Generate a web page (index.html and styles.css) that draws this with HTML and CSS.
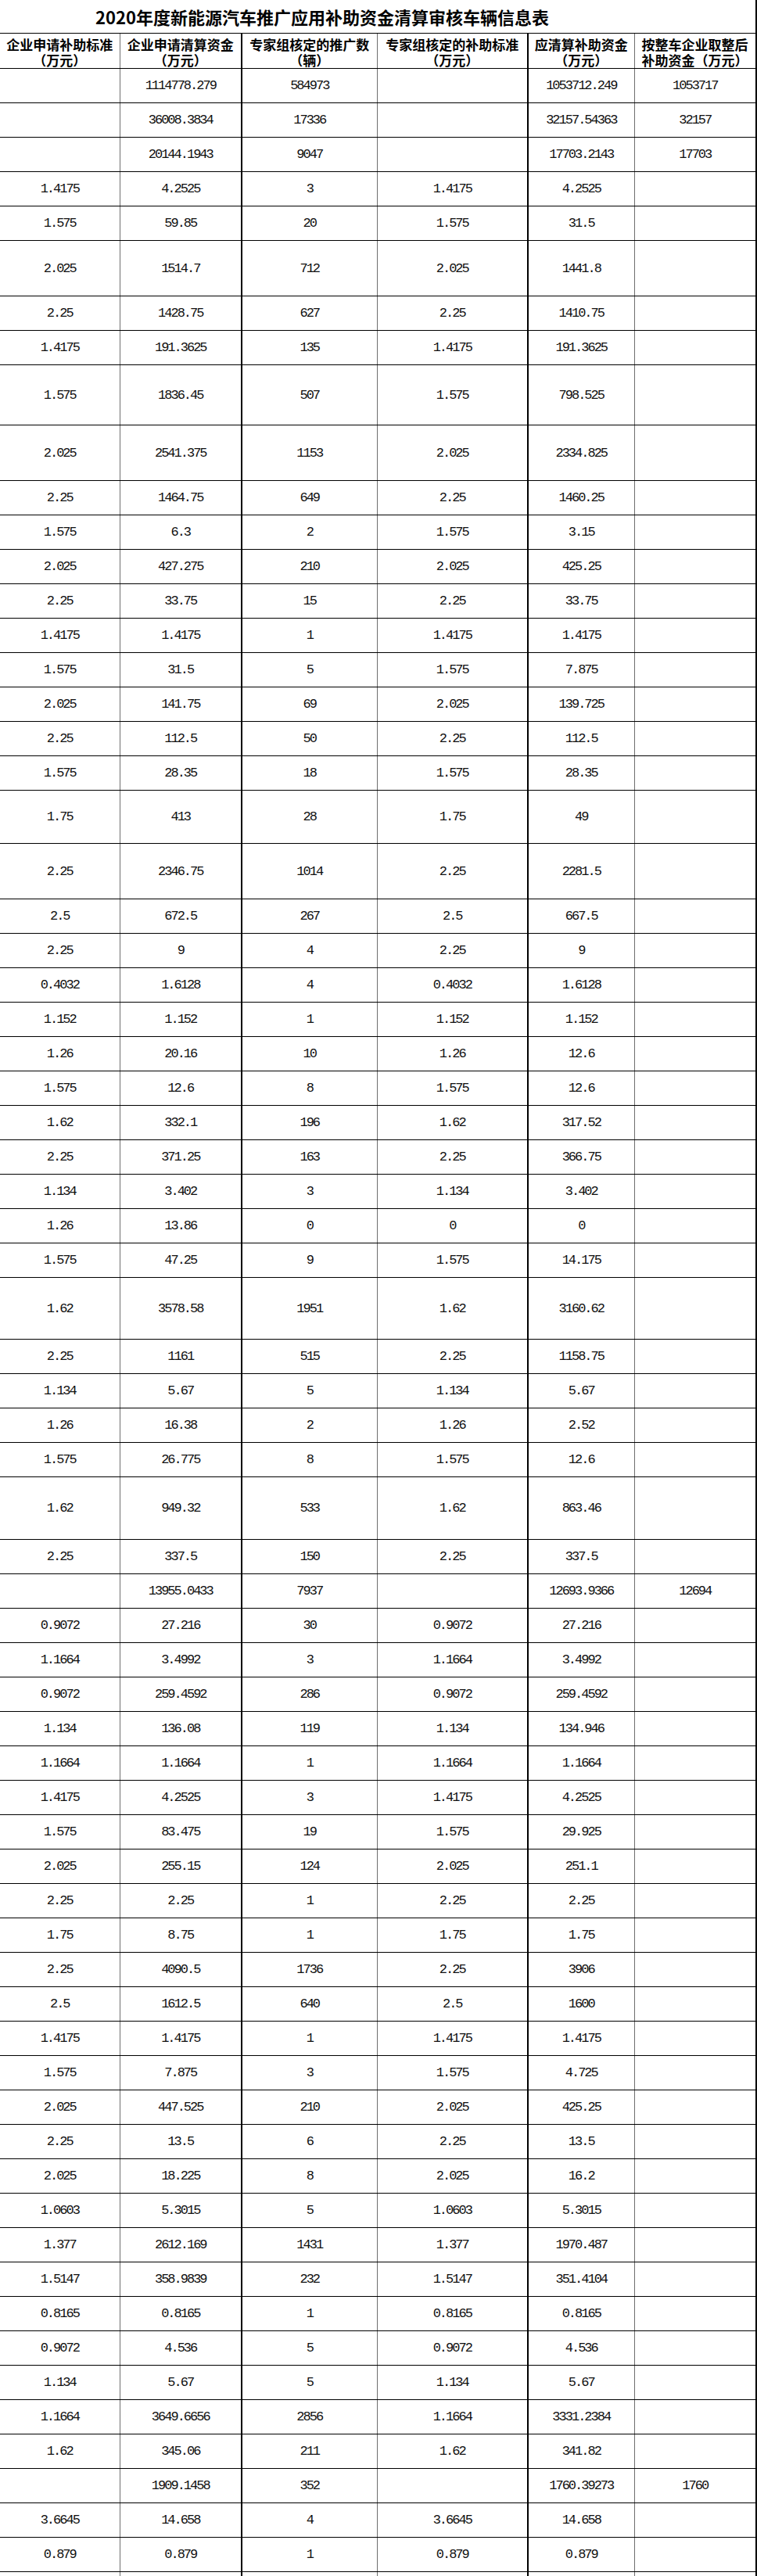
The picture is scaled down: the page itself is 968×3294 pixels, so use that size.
FILE: index.html
```html
<!DOCTYPE html>
<html lang="zh-CN">
<head>
<meta charset="utf-8">
<title>2020年度新能源汽车推广应用补助资金清算审核车辆信息表</title>
<link rel="stylesheet" href="styles.css">
</head>
<body>
<table class="sheet">
<colgroup><col class="c1"><col class="c2"><col class="c3"><col class="c4"><col class="c5"><col class="c6"></colgroup>
<tr class="title-row"><td class="title" colspan="6">2020年度新能源汽车推广应用补助资金清算审核车辆信息表</td></tr>
<tr class="head-row"><td class="head">企业申请补助标准<br>（万元）</td><td class="head">企业申请清算资金<br>（万元）</td><td class="head">专家组核定的推广数<br>（辆）</td><td class="head">专家组核定的补助标准<br>（万元）</td><td class="head">应清算补助资金<br>（万元）</td><td class="head head-left">按整车企业取整后补助资金（万元）</td></tr>
<tr><td></td><td>1114778.279</td><td>584973</td><td></td><td>1053712.249</td><td>1053717</td></tr>
<tr><td></td><td>36008.3834</td><td>17336</td><td></td><td>32157.54363</td><td>32157</td></tr>
<tr><td></td><td>20144.1943</td><td>9047</td><td></td><td>17703.2143</td><td>17703</td></tr>
<tr><td>1.4175</td><td>4.2525</td><td>3</td><td>1.4175</td><td>4.2525</td><td></td></tr>
<tr><td>1.575</td><td>59.85</td><td>20</td><td>1.575</td><td>31.5</td><td></td></tr>
<tr class="h71"><td>2.025</td><td>1514.7</td><td>712</td><td>2.025</td><td>1441.8</td><td></td></tr>
<tr><td>2.25</td><td>1428.75</td><td>627</td><td>2.25</td><td>1410.75</td><td></td></tr>
<tr><td>1.4175</td><td>191.3625</td><td>135</td><td>1.4175</td><td>191.3625</td><td></td></tr>
<tr class="h77"><td>1.575</td><td>1836.45</td><td>507</td><td>1.575</td><td>798.525</td><td></td></tr>
<tr class="h71"><td>2.025</td><td>2541.375</td><td>1153</td><td>2.025</td><td>2334.825</td><td></td></tr>
<tr><td>2.25</td><td>1464.75</td><td>649</td><td>2.25</td><td>1460.25</td><td></td></tr>
<tr><td>1.575</td><td>6.3</td><td>2</td><td>1.575</td><td>3.15</td><td></td></tr>
<tr><td>2.025</td><td>427.275</td><td>210</td><td>2.025</td><td>425.25</td><td></td></tr>
<tr><td>2.25</td><td>33.75</td><td>15</td><td>2.25</td><td>33.75</td><td></td></tr>
<tr><td>1.4175</td><td>1.4175</td><td>1</td><td>1.4175</td><td>1.4175</td><td></td></tr>
<tr><td>1.575</td><td>31.5</td><td>5</td><td>1.575</td><td>7.875</td><td></td></tr>
<tr><td>2.025</td><td>141.75</td><td>69</td><td>2.025</td><td>139.725</td><td></td></tr>
<tr><td>2.25</td><td>112.5</td><td>50</td><td>2.25</td><td>112.5</td><td></td></tr>
<tr><td>1.575</td><td>28.35</td><td>18</td><td>1.575</td><td>28.35</td><td></td></tr>
<tr class="h68"><td>1.75</td><td>413</td><td>28</td><td>1.75</td><td>49</td><td></td></tr>
<tr class="h71"><td>2.25</td><td>2346.75</td><td>1014</td><td>2.25</td><td>2281.5</td><td></td></tr>
<tr><td>2.5</td><td>672.5</td><td>267</td><td>2.5</td><td>667.5</td><td></td></tr>
<tr><td>2.25</td><td>9</td><td>4</td><td>2.25</td><td>9</td><td></td></tr>
<tr><td>0.4032</td><td>1.6128</td><td>4</td><td>0.4032</td><td>1.6128</td><td></td></tr>
<tr><td>1.152</td><td>1.152</td><td>1</td><td>1.152</td><td>1.152</td><td></td></tr>
<tr><td>1.26</td><td>20.16</td><td>10</td><td>1.26</td><td>12.6</td><td></td></tr>
<tr><td>1.575</td><td>12.6</td><td>8</td><td>1.575</td><td>12.6</td><td></td></tr>
<tr><td>1.62</td><td>332.1</td><td>196</td><td>1.62</td><td>317.52</td><td></td></tr>
<tr><td>2.25</td><td>371.25</td><td>163</td><td>2.25</td><td>366.75</td><td></td></tr>
<tr><td>1.134</td><td>3.402</td><td>3</td><td>1.134</td><td>3.402</td><td></td></tr>
<tr><td>1.26</td><td>13.86</td><td>0</td><td>0</td><td>0</td><td></td></tr>
<tr><td>1.575</td><td>47.25</td><td>9</td><td>1.575</td><td>14.175</td><td></td></tr>
<tr class="h79"><td>1.62</td><td>3578.58</td><td>1951</td><td>1.62</td><td>3160.62</td><td></td></tr>
<tr><td>2.25</td><td>1161</td><td>515</td><td>2.25</td><td>1158.75</td><td></td></tr>
<tr><td>1.134</td><td>5.67</td><td>5</td><td>1.134</td><td>5.67</td><td></td></tr>
<tr><td>1.26</td><td>16.38</td><td>2</td><td>1.26</td><td>2.52</td><td></td></tr>
<tr><td>1.575</td><td>26.775</td><td>8</td><td>1.575</td><td>12.6</td><td></td></tr>
<tr class="h80"><td>1.62</td><td>949.32</td><td>533</td><td>1.62</td><td>863.46</td><td></td></tr>
<tr><td>2.25</td><td>337.5</td><td>150</td><td>2.25</td><td>337.5</td><td></td></tr>
<tr><td></td><td>13955.0433</td><td>7937</td><td></td><td>12693.9366</td><td>12694</td></tr>
<tr><td>0.9072</td><td>27.216</td><td>30</td><td>0.9072</td><td>27.216</td><td></td></tr>
<tr><td>1.1664</td><td>3.4992</td><td>3</td><td>1.1664</td><td>3.4992</td><td></td></tr>
<tr><td>0.9072</td><td>259.4592</td><td>286</td><td>0.9072</td><td>259.4592</td><td></td></tr>
<tr><td>1.134</td><td>136.08</td><td>119</td><td>1.134</td><td>134.946</td><td></td></tr>
<tr><td>1.1664</td><td>1.1664</td><td>1</td><td>1.1664</td><td>1.1664</td><td></td></tr>
<tr><td>1.4175</td><td>4.2525</td><td>3</td><td>1.4175</td><td>4.2525</td><td></td></tr>
<tr><td>1.575</td><td>83.475</td><td>19</td><td>1.575</td><td>29.925</td><td></td></tr>
<tr><td>2.025</td><td>255.15</td><td>124</td><td>2.025</td><td>251.1</td><td></td></tr>
<tr><td>2.25</td><td>2.25</td><td>1</td><td>2.25</td><td>2.25</td><td></td></tr>
<tr><td>1.75</td><td>8.75</td><td>1</td><td>1.75</td><td>1.75</td><td></td></tr>
<tr><td>2.25</td><td>4090.5</td><td>1736</td><td>2.25</td><td>3906</td><td></td></tr>
<tr><td>2.5</td><td>1612.5</td><td>640</td><td>2.5</td><td>1600</td><td></td></tr>
<tr><td>1.4175</td><td>1.4175</td><td>1</td><td>1.4175</td><td>1.4175</td><td></td></tr>
<tr><td>1.575</td><td>7.875</td><td>3</td><td>1.575</td><td>4.725</td><td></td></tr>
<tr><td>2.025</td><td>447.525</td><td>210</td><td>2.025</td><td>425.25</td><td></td></tr>
<tr><td>2.25</td><td>13.5</td><td>6</td><td>2.25</td><td>13.5</td><td></td></tr>
<tr><td>2.025</td><td>18.225</td><td>8</td><td>2.025</td><td>16.2</td><td></td></tr>
<tr><td>1.0603</td><td>5.3015</td><td>5</td><td>1.0603</td><td>5.3015</td><td></td></tr>
<tr><td>1.377</td><td>2612.169</td><td>1431</td><td>1.377</td><td>1970.487</td><td></td></tr>
<tr><td>1.5147</td><td>358.9839</td><td>232</td><td>1.5147</td><td>351.4104</td><td></td></tr>
<tr><td>0.8165</td><td>0.8165</td><td>1</td><td>0.8165</td><td>0.8165</td><td></td></tr>
<tr><td>0.9072</td><td>4.536</td><td>5</td><td>0.9072</td><td>4.536</td><td></td></tr>
<tr><td>1.134</td><td>5.67</td><td>5</td><td>1.134</td><td>5.67</td><td></td></tr>
<tr><td>1.1664</td><td>3649.6656</td><td>2856</td><td>1.1664</td><td>3331.2384</td><td></td></tr>
<tr><td>1.62</td><td>345.06</td><td>211</td><td>1.62</td><td>341.82</td><td></td></tr>
<tr><td></td><td>1909.1458</td><td>352</td><td></td><td>1760.39273</td><td>1760</td></tr>
<tr><td>3.6645</td><td>14.658</td><td>4</td><td>3.6645</td><td>14.658</td><td></td></tr>
<tr><td>0.879</td><td>0.879</td><td>1</td><td>0.879</td><td>0.879</td><td></td></tr>
<tr><td></td><td></td><td></td><td></td><td></td><td></td></tr>
</table>
</body>
</html>
```
FILE: styles.css
```css
html, body {
  margin: 0;
  padding: 0;
  background: #ffffff;
  color: #000000;
}

.sheet {
  border-collapse: collapse;
  table-layout: fixed;
  width: 967px;
}

.c1 { width: 153px; }
.c2 { width: 156px; }
.c3 { width: 173px; }
.c4 { width: 193px; }
.c5 { width: 136px; }
.c6 { width: 156px; }

.sheet tr { height: 44px; }
.sheet tr.h68 { height: 68px; }
.sheet tr.h71 { height: 71px; }
.sheet tr.h77 { height: 77px; }
.sheet tr.h79 { height: 79px; }
.sheet tr.h80 { height: 80px; }

.sheet td {
  padding: 2px 0 0 0;
  text-align: center;
  vertical-align: middle;
  border-bottom: 1px solid #000;
  font-family: "Liberation Mono", "DejaVu Sans Mono", monospace;
  font-size: 17px;
  letter-spacing: -2px;
  line-height: 18px;
  white-space: nowrap;
  color: #111;
}

.sheet td:nth-child(1),
.sheet td:nth-child(3),
.sheet td:nth-child(5) {
  border-right: 1px solid #6e6e6e;
}

.sheet td:nth-child(2),
.sheet td:nth-child(4),
.sheet td:nth-child(6) {
  border-right: 2px solid #000;
}

.sheet tr.title-row { height: 42px; }
.sheet tr.head-row { height: 43px; }

.sheet td.title {
  text-align: left;
  padding: 0 0 0 122px;
  font-family: "Noto Sans CJK SC", sans-serif;
  font-size: 22px;
  font-weight: 700;
  letter-spacing: 0;
  border-right: 2px solid #000;
  color: #000;
}

.sheet td.head {
  padding: 4px 0 0 0;
  font-family: "Noto Sans CJK SC", sans-serif;
  font-size: 17px;
  font-weight: 700;
  letter-spacing: 0;
  line-height: 20px;
  color: #000;
}

.sheet td.head-left {
  white-space: normal;
  text-align: left;
  padding-left: 9px;
  padding-right: 8px;
}
```
